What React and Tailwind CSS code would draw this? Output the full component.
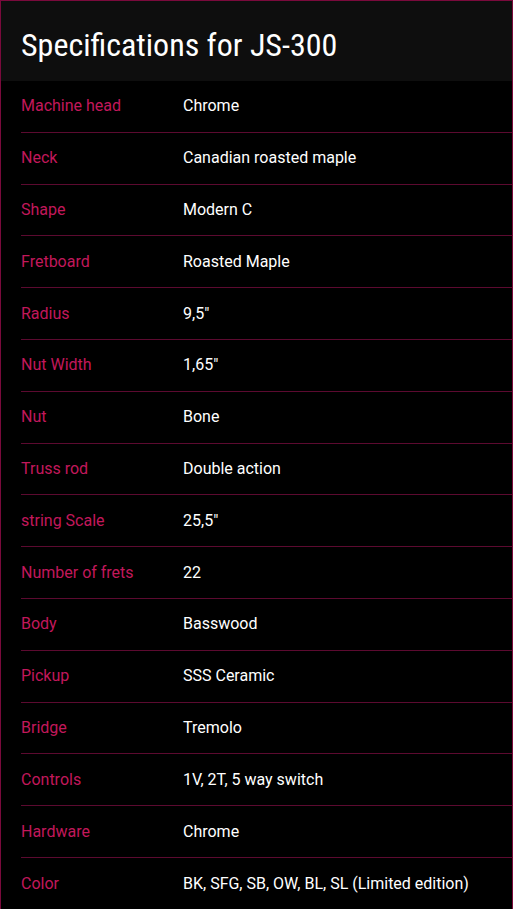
import React from 'react';

const specs = [
  ['Machine head', 'Chrome'],
  ['Neck', 'Canadian roasted maple'],
  ['Shape', 'Modern C'],
  ['Fretboard', 'Roasted Maple'],
  ['Radius', '9,5"'],
  ['Nut Width', '1,65"'],
  ['Nut', 'Bone'],
  ['Truss rod', 'Double action'],
  ['string Scale', '25,5"'],
  ['Number of frets', '22'],
  ['Body', 'Basswood'],
  ['Pickup', 'SSS Ceramic'],
  ['Bridge', 'Tremolo'],
  ['Controls', '1V, 2T, 5 way switch'],
  ['Hardware', 'Chrome'],
  ['Color', 'BK, SFG, SB, OW, BL, SL (Limited edition)'],
];

const App = () => {
  return (
    <div className="w-[513px] h-[909px] overflow-hidden bg-black border-l border-r border-t border-[#7a0a3c] font-['Roboto',sans-serif]">
      <div className="h-[80px] bg-[#0e0e0e] pl-5 flex items-center">
        <h1 className="text-[32px] text-white font-normal leading-none pt-[7px] font-stretch-semi-condensed">Specifications for JS-300</h1>
      </div>
      <div className="pl-5">
        {specs.map(([label, value], i) => (
          <div
            key={label}
            className={`flex items-center h-[51.8px] text-[16px] ${i < specs.length - 1 ? 'border-b border-[#5c0a30]' : ''}`}
          >
            <span className="w-[162px] text-[#c2185b]">{label}</span>
            <span className="text-white">{value}</span>
          </div>
        ))}
      </div>
    </div>
  );
};

export default App;
